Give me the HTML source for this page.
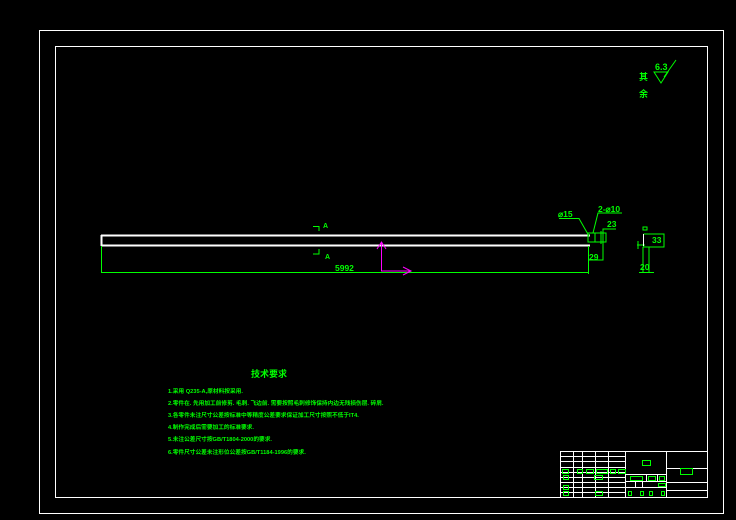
<!DOCTYPE html>
<html><head><meta charset="utf-8"><style>
html,body{margin:0;padding:0;background:#000;width:736px;height:520px;overflow:hidden}
svg{display:block}
text{font-family:"Liberation Sans","Noto Sans CJK SC",sans-serif;fill:#0f0;font-weight:bold}
</style></head><body>
<svg width="736" height="520" viewBox="0 0 736 520">
<rect x="39.5" y="30.5" width="684" height="483" fill="none" stroke="#fff" stroke-width="1"/>
<rect x="55.5" y="46.5" width="652" height="451" fill="none" stroke="#fff" stroke-width="1"/>
<text x="655" y="70" font-size="9">6.3</text>
<path d="M654 72 L668 72 L661 83 Z M664 77 L676 60" fill="none" stroke="#0f0"/>
<text x="639" y="80" font-size="9">其</text>
<text x="639" y="97" font-size="9">余</text>
<path d="M101 235.5 H590 M101 245.5 H590 M101.5 235 V246" stroke="#fff" stroke-width="2" fill="none"/>
<path d="M101.5 246 V273 M588.5 246 V274 M101 272.5 H588" stroke="#0f0" fill="none"/>
<text x="335" y="271" font-size="8.5">5992</text>
<path d="M313 226.5 H319 V231 M319 249 V254 H313" stroke="#0f0" fill="none"/>
<text x="323" y="228" font-size="7">A</text>
<text x="325" y="259" font-size="7">A</text>
<path d="M381.5 242 V271 H410 M377 249 L381.5 242 L386 249 M403 267 L411 271 L403 275" stroke="#f0f" fill="none"/>
<path d="M559 218.5 H579 L589 236 M593 233 L598 213 H622 M603 240 V229 H616 M603 240 V260 H589" stroke="#0f0" fill="none"/>
<path d="M588 233 H606 V242 H588 Z M595 233 V242 M601 231 V244" stroke="#0f0" fill="none"/>
<text x="558" y="217" font-size="8.5">⌀15</text>
<text x="598" y="212" font-size="8.5">2-⌀10</text>
<text x="607" y="227" font-size="8.5">23</text>
<text x="589" y="260" font-size="8.5">29</text>
<rect x="643" y="227" width="4" height="3" fill="none" stroke="#0f0"/>
<path d="M643.5 234 H664 V247 H643.5 M643.5 234 V247 M643 247 V272 M649 247 V272 M639 272.5 H654 M637 245 H645 M638 241 V249" stroke="#0f0" fill="none"/>
<path d="M643.5 234 V246" stroke="#fff"/>
<text x="652" y="243" font-size="8.5">33</text>
<text x="640" y="270" font-size="8.5">20</text>
<text x="251" y="377" font-size="9">技术要求</text>
<g font-size="5.7">
<text x="168" y="393">1.采用  Q235-A,原材料按采用.</text>
<text x="168" y="405">2.零件在. 先用加工前修剪. 毛刺. 飞边前. 需要按照毛刺修饰保持内边无残损伤层. 碎屑.</text>
<text x="168" y="417">3.各零件未注尺寸公差按标准中等精度公差要求保证加工尺寸按照不低于IT4.</text>
<text x="168" y="429">4.制作完成后需要加工的标准要求.</text>
<text x="168" y="441">5.未注公差尺寸按GB/T1804-2000的要求.</text>
<text x="168" y="454">6.零件尺寸公差未注形位公差按GB/T1184-1996的要求.</text>
</g>
<g stroke="#fff" fill="none" stroke-width="1">
<path d="M560.5 451 V497 M560 451.5 H707 M625.5 451 V497 M666.5 451 V497 M560 456.5 H625 M560 461.5 H625 M560 467.5 H625 M560 472.5 H625 M560 477.5 H625 M560 482.5 H625 M560 487.5 H625 M560 492.5 H625 M573.5 451 V497 M582.5 451 V497 M595.5 451 V497 M608.5 451 V497 M625 474.5 H666 M625 481.5 H666 M625 487.5 H666 M666 468.5 H707 M666 482.5 H707 M666 490.5 H707 M646.5 474 V481 M657.5 474 V481 M635.5 481 V488 M642.5 481 V488"/>
</g>
<g stroke="#0f0" fill="none">
<rect x="642.5" y="460.5" width="8" height="5"/>
<rect x="680.5" y="468.5" width="12" height="6"/>
<rect x="630.5" y="476.5" width="12" height="4"/>
<rect x="648.5" y="476.5" width="7" height="4"/>
<rect x="659.5" y="476.5" width="5" height="4"/>
<rect x="658.5" y="483.5" width="7" height="3"/>
<rect x="562.5" y="469.5" width="6" height="4"/>
<rect x="577.5" y="469.5" width="5" height="4"/>
<rect x="586.5" y="469.5" width="7" height="4"/>
<rect x="596.5" y="469.5" width="11" height="4"/>
<rect x="610.5" y="469.5" width="5" height="4"/>
<rect x="618.5" y="469.5" width="7" height="4"/>
<rect x="563.5" y="475.5" width="5" height="4"/>
<rect x="594.5" y="475.5" width="8" height="4"/>
<rect x="563.5" y="485.5" width="5" height="4"/>
<rect x="563.5" y="491.5" width="5" height="4"/>
<rect x="595.5" y="491.5" width="7" height="4"/>
<rect x="628.5" y="491.5" width="3" height="4"/>
<rect x="640.5" y="491.5" width="3" height="4"/>
<rect x="649.5" y="491.5" width="3" height="4"/>
<rect x="661.5" y="491.5" width="3" height="4"/>
</g>
</svg>
</body></html>
